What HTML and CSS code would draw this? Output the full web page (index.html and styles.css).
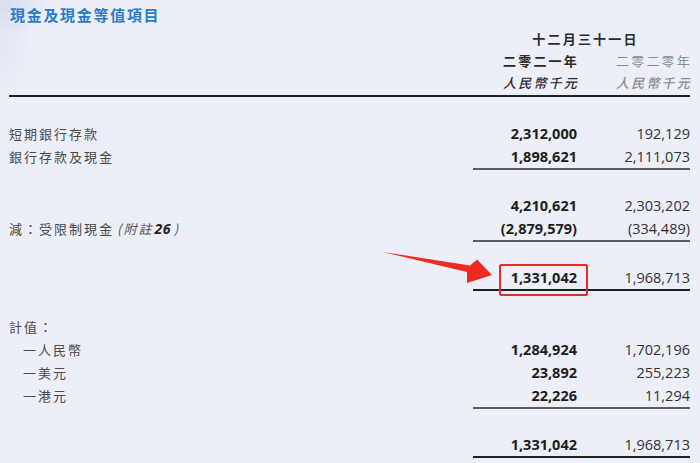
FILE: index.html
```html
<!DOCTYPE html>
<html lang="zh-Hant">
<head>
<meta charset="utf-8">
<title>現金及現金等值項目</title>
<link rel="stylesheet" href="styles.css">
</head>
<body>
<div class="page">
  <h1 class="title">現金及現金等值項目</h1>

  <div class="head">
    <div class="row">
      <div class="label"></div>
      <div class="span-date">十二月三十一日</div>
    </div>
    <div class="row">
      <div class="label"></div>
      <div class="h cur">二零二一年</div>
      <div class="h prev">二零二零年</div>
    </div>
    <div class="row">
      <div class="label"></div>
      <div class="h cur it">人民幣千元</div>
      <div class="h prev it">人民幣千元</div>
    </div>
  </div>

  <div class="group first">
    <div class="row">
      <div class="label">短期銀行存款</div>
      <div class="num cur">2,312,000</div>
      <div class="num prev">192,129</div>
    </div>
    <div class="row">
      <div class="label">銀行存款及現金</div>
      <div class="num cur rule">1,898,621</div>
      <div class="num prev rule">2,111,073</div>
    </div>
  </div>

  <div class="group">
    <div class="row">
      <div class="label"></div>
      <div class="num cur">4,210,621</div>
      <div class="num prev">2,303,202</div>
    </div>
    <div class="row">
      <div class="label">減：受限制現金<span class="note">(附註<b>26</b>)</span></div>
      <div class="num cur rule">(2,879,579)</div>
      <div class="num prev rule">(334,489)</div>
    </div>
  </div>

  <div class="group">
    <div class="row">
      <div class="label"></div>
      <div class="num cur rule dark highlight">1,331,042<span class="box"></span></div>
      <div class="num prev rule dark">1,968,713</div>
    </div>
  </div>

  <div class="group">
    <div class="row">
      <div class="label">計值：</div>
      <div class="num cur"></div>
      <div class="num prev"></div>
    </div>
    <div class="row">
      <div class="label sub">一人民幣</div>
      <div class="num cur">1,284,924</div>
      <div class="num prev">1,702,196</div>
    </div>
    <div class="row">
      <div class="label sub">一美元</div>
      <div class="num cur">23,892</div>
      <div class="num prev">255,223</div>
    </div>
    <div class="row">
      <div class="label sub">一港元</div>
      <div class="num cur rule">22,226</div>
      <div class="num prev rule">11,294</div>
    </div>
  </div>

  <div class="group">
    <div class="row">
      <div class="label"></div>
      <div class="num cur rule dark">1,331,042</div>
      <div class="num prev rule dark">1,968,713</div>
    </div>
  </div>

  <svg class="arrow" width="700" height="463" viewBox="0 0 700 463" aria-hidden="true">
    <polygon points="383,252 470,265.5 477,259.5 492,275 467,283 467,272" fill="#ef2a21"/>
  </svg>
</div>
</body>
</html>
```

FILE: styles.css
```css
html, body {
  margin: 0;
  padding: 0;
}

body {
  background-color: #eceef8;
  background-image:
    radial-gradient(ellipse 40px 30px at 8px 6px, rgba(200, 212, 228, 0.55), rgba(236, 238, 248, 0) 100%),
    radial-gradient(ellipse 30px 60px at 2px 40px, rgba(210, 220, 232, 0.35), rgba(236, 238, 248, 0) 100%);
  background-repeat: no-repeat;
  font-family: "Noto Sans CJK TC", "Noto Sans", sans-serif;
  color: #444;
  width: 700px;
  height: 463px;
  overflow: hidden;
}

.page {
  position: relative;
  padding: 5px 10px 0 9px;
  height: 463px;
  box-sizing: border-box;
}

.title {
  margin: 0 0 2px 1px;
  height: 20px;
  line-height: 20px;
  font-size: 15px;
  font-weight: 700;
  letter-spacing: 1.7px;
  color: #2a7cc6;
}

.head {
  border-bottom: 2px solid #222;
  padding-bottom: 2px;
}

.row {
  display: grid;
  grid-template-columns: 1fr 114px 103px;
  align-items: start;
}

.head .row {
  height: 22px;
  align-items: center;
}

.label {
  font-size: 13px;
  letter-spacing: 2px;
  color: #4a4a4a;
  white-space: nowrap;
  height: 23px;
  line-height: 23px;
}

.label.sub {
  padding-left: 14px;
}

.note {
  font-style: italic;
  color: #555;
  letter-spacing: 2px;
  margin-left: 3px;
}

.note b {
  font-family: "Open Sans", sans-serif;
  font-weight: 700;
  color: #222;
  font-size: 14px;
  letter-spacing: 0.5px;
  margin: 0 3px 0 1px;
}

.span-date {
  grid-column: 2 / 4;
  text-align: center;
  padding-left: 8px;
  font-size: 13px;
  letter-spacing: 2.2px;
  font-weight: 700;
  color: #2b2b2b;
}

.h {
  text-align: right;
  font-size: 13px;
  letter-spacing: 2.2px;
  white-space: nowrap;
}

.h.cur {
  font-weight: 700;
  color: #2b2b2b;
  padding-right: 8px;
}

.h.prev {
  color: #8c8c8c;
  margin-right: -2px;
}

.h.it {
  font-style: italic;
  font-weight: 500;
}

.num {
  font-family: "Open Sans", "Liberation Sans", sans-serif;
  font-size: 14.5px;
  text-align: right;
  height: 23px;
  line-height: 23px;
}

.num.cur {
  font-weight: 700;
  color: #1d1d1d;
  padding-right: 10px;
}

.num.prev {
  color: #333;
}

.num.rule {
  border-bottom: 2px solid #5d5d5d;
}

.num.rule.dark {
  border-bottom-color: #1f1f1f;
}

.group {
  margin-top: 24px;
}

.group.first {
  margin-top: 25px;
}

.highlight {
  position: relative;
}

.box {
  position: absolute;
  left: 26px;
  right: -1px;
  top: -2px;
  height: 28px;
  border: 2px solid #ea2c26;
  border-radius: 2px;
}

.arrow {
  position: absolute;
  left: 0;
  top: 0;
  pointer-events: none;
}
```
